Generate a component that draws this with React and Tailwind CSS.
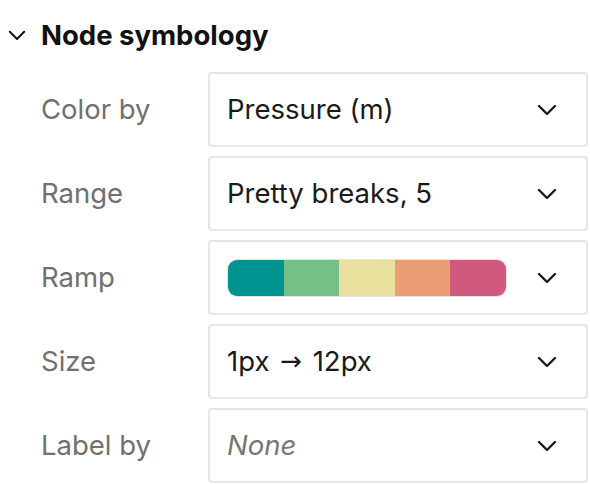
import React from "react";

const RAMP = ["#009490", "#74c188", "#e8e09c", "#eb9e76", "#cf5a7e"];

function Chevron({ className = "", width = 20, stroke = 2.4 }) {
  return (
    <svg
      viewBox="0 0 20 12"
      width={width}
      height={(width * 12) / 20}
      fill="none"
      stroke="currentColor"
      strokeWidth={stroke}
      strokeLinecap="round"
      strokeLinejoin="round"
      className={className}
    >
      <path d="M2 2l8 8 8-8" />
    </svg>
  );
}

function Field({ label, children }) {
  return (
    <div className="flex items-center">
      <div className="w-[167px] text-[27.5px] text-[#707070]">{label}</div>
      <div className="flex h-[75px] flex-1 items-center justify-between rounded-[4px] border-2 border-[#e6e6e6] pl-[17px] pr-[29px]">
        <div className="flex items-center whitespace-pre text-[27.5px] text-[#1a1a1a]">{children}</div>
        <Chevron className="text-[#1a1a1a]" />
      </div>
    </div>
  );
}

export default function App() {
  return (
    <div
      className="h-[484px] w-[590px] bg-white pl-[8px] pr-[2px] pt-[15px]"
      style={{ fontFamily: "Inter, 'Noto Sans', sans-serif" }}
    >
      <div className="flex items-center gap-[15px]">
        <Chevron className="text-[#111]" width={18} stroke={2.2} />
        <div className="text-[27.5px] font-bold text-[#111]">Node symbology</div>
      </div>
      <div className="mt-[16px] flex flex-col gap-[9px] pl-[33px]">
        <Field label="Color by">Pressure (m)</Field>
        <Field label="Range">Pretty breaks, 5</Field>
        <Field label="Ramp">
          <div className="flex h-[38px] w-[280px] overflow-hidden rounded-[10px] border border-[#e4e4e4]">
            {RAMP.map((c) => (
              <div key={c} className="flex-1" style={{ backgroundColor: c }} />
            ))}
          </div>
        </Field>
        <Field label="Size">
          <span>1px </span>
          <span className="mx-[3px] text-[26px]" style={{ fontFamily: "'DejaVu Sans', sans-serif" }}>
            →
          </span>
          <span> 12px</span>
        </Field>
        <Field label="Label by">
          <span className="italic text-[#767676]">None</span>
        </Field>
      </div>
    </div>
  );
}
